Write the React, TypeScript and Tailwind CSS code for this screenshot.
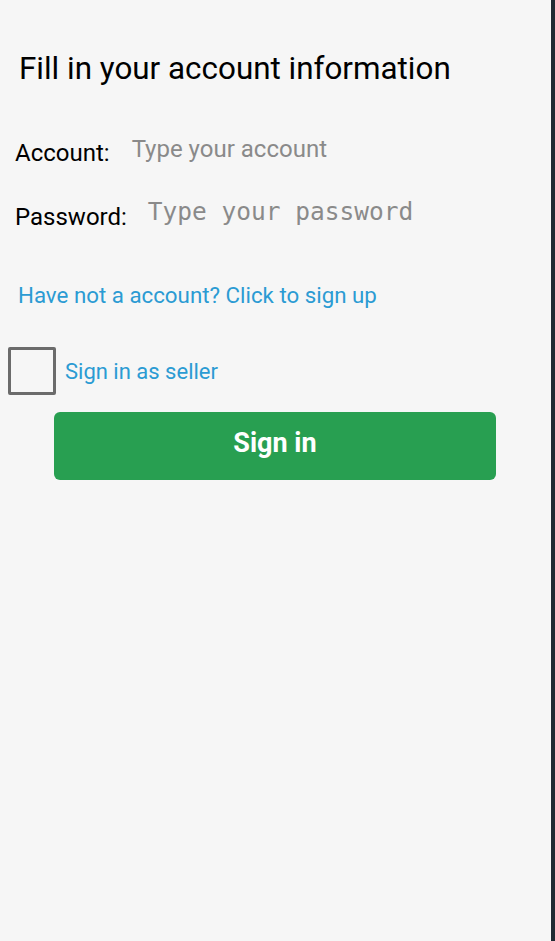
export default function App() {
  return (
    <div className="relative flex min-h-[941px] w-full bg-[#f6f6f6] font-['Roboto',sans-serif]">
      <div className="flex flex-1 flex-col">
        {/* Title */}
        <h1 className="ml-[19px] mt-[51px] text-[31.4px] leading-[36px] text-black">
          Fill in your account information
        </h1>

        {/* Fields */}
        <div className="ml-[15px] mt-[52px] flex items-end">
          <span className="text-[24px] leading-[28px] text-black">Account:</span>
          <span className="ml-[22px] -translate-y-[4px] text-[24px] leading-[28px] text-[#8a8a8a]">
            Type your account
          </span>
        </div>
        <div className="ml-[15px] mt-[36px] flex items-end">
          <span className="text-[24px] leading-[28px] text-black">Password:</span>
          <span className="ml-[21px] -translate-y-[5px] font-['DejaVu_Sans_Mono',monospace] text-[24.5px] leading-[28px] text-[#8a8a8a]">
            Type your password
          </span>
        </div>

        {/* Sign up link */}
        <a className="ml-[18px] mt-[51px] text-[22.3px] leading-[26px] text-[#2b9bd3]">
          Have not a account? Click to sign up
        </a>

        {/* Seller checkbox */}
        <div className="ml-[8px] mt-[39px] flex items-center">
          <span className="h-[48px] w-[48px] rounded-[2px] border-[3px] border-[#6b6b6b]" />
          <span className="ml-[9px] translate-y-[1px] text-[22px] leading-[26px] text-[#2b9bd3]">
            Sign in as seller
          </span>
        </div>

        {/* Sign in button */}
        <button className="ml-[54px] mt-[17px] h-[68px] w-[442px] rounded-[6px] bg-[#289f51] pb-[6px] text-[27px] font-bold text-white">
          Sign in
        </button>
      </div>
      <div className="w-[4px] bg-[#1f2a33]" />
    </div>
  )
}
